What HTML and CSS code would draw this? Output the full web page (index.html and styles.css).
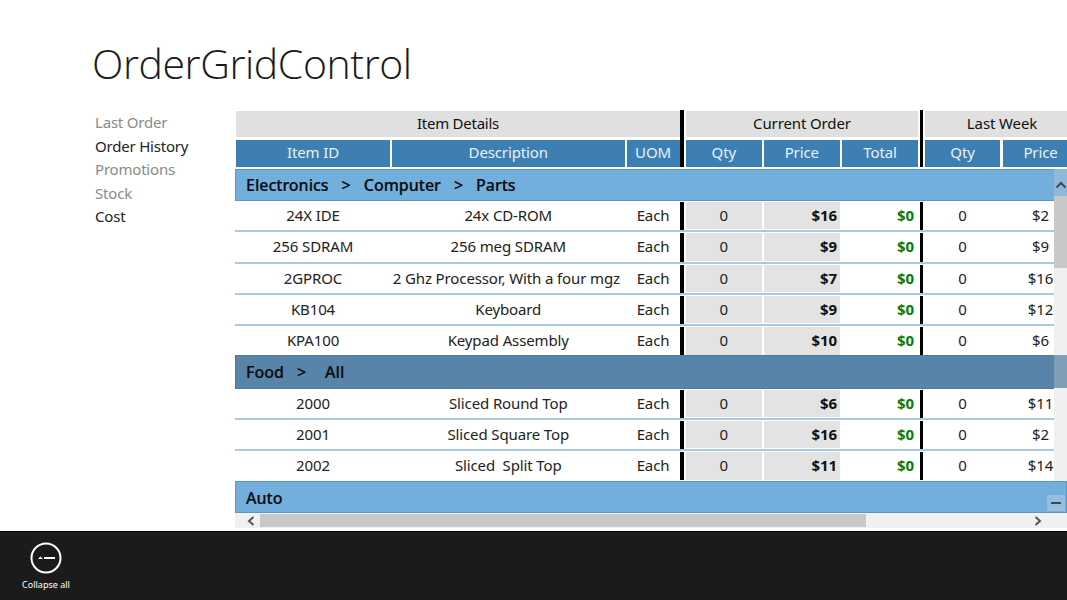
FILE: index.html
```html
<!DOCTYPE html>
<html lang="en">
<head>
<meta charset="utf-8">
<title>OrderGridControl</title>
<link rel="stylesheet" href="styles.css">
</head>
<body>
<main class="page">
  <h1 class="title">OrderGridControl</h1>
  <div class="content">
    <nav class="nav">
      <a class="dim">Last Order</a>
      <a>Order History</a>
      <a class="dim">Promotions</a>
      <a class="dim">Stock</a>
      <a>Cost</a>
    </nav>
    <section class="grid">
      <div class="bands">
        <div class="band b-details">Item Details</div><i class="sep"></i>
        <div class="band b-current">Current Order</div><i class="sep sep2"></i>
        <div class="band b-last">Last Week</div>
      </div>
      <div class="heads">
        <div class="hd c-id">Item ID</div>
        <div class="hd c-desc">Description</div>
        <div class="hd c-uom">UOM</div><i class="sep"></i>
        <div class="hd c-qty">Qty</div>
        <div class="hd c-price">Price</div>
        <div class="hd c-total">Total</div><i class="sep sep2"></i>
        <div class="hd c-lqty">Qty</div>
        <div class="hd c-lprice">Price</div>
      </div>
      <div class="body">
        <div class="group">Electronics<span class="gt">&gt;</span>Computer<span class="gt">&gt;</span>Parts</div>
        <div class="row"><span class="c-id">24X IDE</span><span class="c-desc">24x CD-ROM</span><span class="c-uom">Each</span><i class="sep"></i><span class="c-qty cell-q">0</span><span class="c-price cell-p">$16</span><span class="c-total cell-t">$0</span><i class="sep sep2"></i><span class="c-lqty">0</span><span class="c-lprice">$2</span></div>
        <div class="row"><span class="c-id">256 SDRAM</span><span class="c-desc">256 meg SDRAM</span><span class="c-uom">Each</span><i class="sep"></i><span class="c-qty cell-q">0</span><span class="c-price cell-p">$9</span><span class="c-total cell-t">$0</span><i class="sep sep2"></i><span class="c-lqty">0</span><span class="c-lprice">$9</span></div>
        <div class="row"><span class="c-id">2GPROC</span><span class="c-desc">2 Ghz Processor, With a four mgz&nbsp;</span><span class="c-uom">Each</span><i class="sep"></i><span class="c-qty cell-q">0</span><span class="c-price cell-p">$7</span><span class="c-total cell-t">$0</span><i class="sep sep2"></i><span class="c-lqty">0</span><span class="c-lprice">$16</span></div>
        <div class="row"><span class="c-id">KB104</span><span class="c-desc">Keyboard</span><span class="c-uom">Each</span><i class="sep"></i><span class="c-qty cell-q">0</span><span class="c-price cell-p">$9</span><span class="c-total cell-t">$0</span><i class="sep sep2"></i><span class="c-lqty">0</span><span class="c-lprice">$12</span></div>
        <div class="row row-end"><span class="c-id">KPA100</span><span class="c-desc">Keypad Assembly</span><span class="c-uom">Each</span><i class="sep"></i><span class="c-qty cell-q">0</span><span class="c-price cell-p">$10</span><span class="c-total cell-t">$0</span><i class="sep sep2"></i><span class="c-lqty">0</span><span class="c-lprice">$6</span></div>
        <div class="group group-dark">Food<span class="gt gt-wide">&gt;</span>All</div>
        <div class="row"><span class="c-id">2000</span><span class="c-desc">Sliced Round Top</span><span class="c-uom">Each</span><i class="sep"></i><span class="c-qty cell-q">0</span><span class="c-price cell-p">$6</span><span class="c-total cell-t">$0</span><i class="sep sep2"></i><span class="c-lqty">0</span><span class="c-lprice">$11</span></div>
        <div class="row"><span class="c-id">2001</span><span class="c-desc">Sliced Square Top</span><span class="c-uom">Each</span><i class="sep"></i><span class="c-qty cell-q">0</span><span class="c-price cell-p">$16</span><span class="c-total cell-t">$0</span><i class="sep sep2"></i><span class="c-lqty">0</span><span class="c-lprice">$2</span></div>
        <div class="row row-end"><span class="c-id">2002</span><span class="c-desc">Sliced&nbsp; Split Top</span><span class="c-uom">Each</span><i class="sep"></i><span class="c-qty cell-q">0</span><span class="c-price cell-p">$11</span><span class="c-total cell-t">$0</span><i class="sep sep2"></i><span class="c-lqty">0</span><span class="c-lprice">$14</span></div>
        <div class="group group-last">Auto</div>
        <div class="vtrack">
          <span class="vbtn"><svg width="12" height="8" viewBox="0 0 12 8"><path d="M1.500 6.500 6 2l4.500 4.500" fill="none" stroke="#3c4a55" stroke-width="2"/></svg></span>
          <span class="vthumb"></span>
          <span class="vfood"></span>
        </div>
        <span class="collapse-btn"><b></b></span>
      </div>
      <div class="hscroll">
        <svg class="harrow" width="8" height="10" viewBox="0 0 8 10"><path d="M6.500 1 2 5l4.500 4" fill="none" stroke="#555" stroke-width="2"/></svg>
        <span class="hthumb"></span>
        <svg class="harrow" width="8" height="10" viewBox="0 0 8 10"><path d="M1.500 1 6 5 1.500 9" fill="none" stroke="#555" stroke-width="2"/></svg>
      </div>
    </section>
  </div>
</main>
<footer class="appbar">
  <button class="barbtn">
    <svg width="32" height="32" viewBox="0 0 32 32"><circle cx="16" cy="16" r="14.500" fill="none" stroke="#fff" stroke-width="2"/><path d="M14 15h11v2H14zM8 17l2.500-2.500L13 17z" fill="#fff"/></svg>
    <span>Collapse all</span>
  </button>
</footer>
</body>
</html>
```
FILE: styles.css
```css
* { box-sizing: border-box; }
html, body { margin: 0; height: 100%; }
body { width: 1067px; height: 600px; overflow: hidden; display: flex; flex-direction: column; background: #fff; color: #111; font-family: "Noto Sans", "Open Sans", sans-serif; }
.page { height: 531px; flex: none; padding: 0 0 0 93px; overflow: hidden; }
.title { margin: 0 0 0 -1px; padding-top: 37px; height: 110px; font-family: "Open Sans", sans-serif; font-weight: 300; font-size: 41px; line-height: 52px; color: #1a1a1a; letter-spacing: -0.4px; }
.content { display: flex; align-items: flex-start; }
.nav { width: 142px; flex: none; display: flex; flex-direction: column; padding: 1.4px 0 0 2px; font-size: 15px; line-height: 23.4px; color: #222; letter-spacing: -0.2px; }
.dim { color: #8a8a8a; }
.grid { flex: none; width: 832px; overflow: hidden; }
.bands, .heads { display: flex; padding-left: 1px; letter-spacing: -0.12px; }
.bands { height: 29px; }
.band { background: #e0e0e0; text-align: center; font-size: 15px; line-height: 25px; height: 26px; margin-top: 1px; flex: none; }
.b-details { width: 444px; letter-spacing: -0.25px; }
.b-current { width: 232px; margin-right: 1.5px; }
.b-last { width: 154px; }
.sep { flex: none; width: 3.5px; background: #000; margin-right: 2.5px; }
.sep2 { margin-right: 2px; }
.heads { height: 28px; }
.hd { flex: none; background: #3d7fb3; color: #e8f1f8; font-size: 15px; line-height: 25px; text-align: center; height: 26.5px; margin-top: 1px; }
.c-id { flex: none; width: 154px; margin-right: 2px; }
.c-desc { flex: none; width: 232.5px; margin-right: 2px; }
.c-uom { flex: none; width: 53px; margin-right: 0.5px; }
.c-qty { flex: none; width: 75.5px; margin-right: 2.5px; }
.c-price { flex: none; width: 75.5px; margin-right: 2.5px; }
.c-total { flex: none; width: 76px; margin-right: 1.5px; }
.c-lqty { flex: none; width: 75px; margin-right: 3px; }
.c-lprice { flex: none; width: 75px; }
.body { position: relative; margin-top: 2px; height: 344px; overflow: hidden; }
.group { height: 32px; background: #72afdd; border: 1px solid #5b97c6; padding-left: 10px; font-size: 16px; font-weight: 500; line-height: 30px; color: #0b0b0b; -webkit-text-stroke: 0.2px #0b0b0b; }
.gt { margin: 0 13px; }
.gt-wide { margin: 0 19px 0 13px; }
.group-dark { background: #5784a8; height: 33.25px; line-height: 32px; border-color: #4f7a9c; }
.group-last { margin-top: 0.75px; line-height: 32px; }
.row { display: flex; height: 31.25px; padding: 1px 0 0 1px; border-bottom: 2px solid #a5cbe5; font-size: 15px; line-height: 26px; text-align: center; white-space: nowrap; color: #222; letter-spacing: -0.12px; }
.row-end { height: 29.25px; border-bottom: 0; }
.row > span { margin-bottom: 1px; }
.row-end > span { margin-bottom: 0; }
.row .cell-q { background: #e3e3e3; }
.row .cell-p { background: #e3e3e3; text-align: right; padding-right: 2.5px; font-weight: 700; color: #111; }
.row .cell-t { text-align: right; padding-right: 4px; font-weight: 700; color: #0a7d0a; }
.vtrack { position: absolute; right: 0; top: 0; width: 13px; height: 312px; background: #f0f0f0; pointer-events: none; }
.vbtn { display: flex; justify-content: center; padding-top: 12px; height: 27px; background: #8fb9d9; }
.vthumb { display: block; height: 72px; background: #c8c8c8; }
.vfood { position: absolute; left: 0; right: 0; top: 186px; height: 33px; background: #7f9fb6; }
.collapse-btn { position: absolute; right: 2px; top: 326px; width: 18px; height: 16px; background: #97bedc; display: flex; align-items: center; justify-content: center; }
.collapse-btn b { display: block; width: 10px; height: 2px; background: #3c4a55; }
.hscroll { display: flex; align-items: center; height: 15px; background: #f0f0f0; }
.harrow { flex: none; margin: 0 5px 0 12px; }
.harrow:last-child { margin: 0 0 0 168px; }
.hthumb { display: block; width: 606px; height: 13px; background: #c8c8c8; }
.appbar { flex: 1; background: #1b1b1b; border-top: 1px solid #000; padding-top: 10px; }
.barbtn { appearance: none; background: none; border: 0; padding: 0; margin: 0 0 0 15px; width: 62px; display: flex; flex-direction: column; align-items: center; gap: 4px; color: #fff; font: 9px/13px "Noto Sans", sans-serif; }
```
